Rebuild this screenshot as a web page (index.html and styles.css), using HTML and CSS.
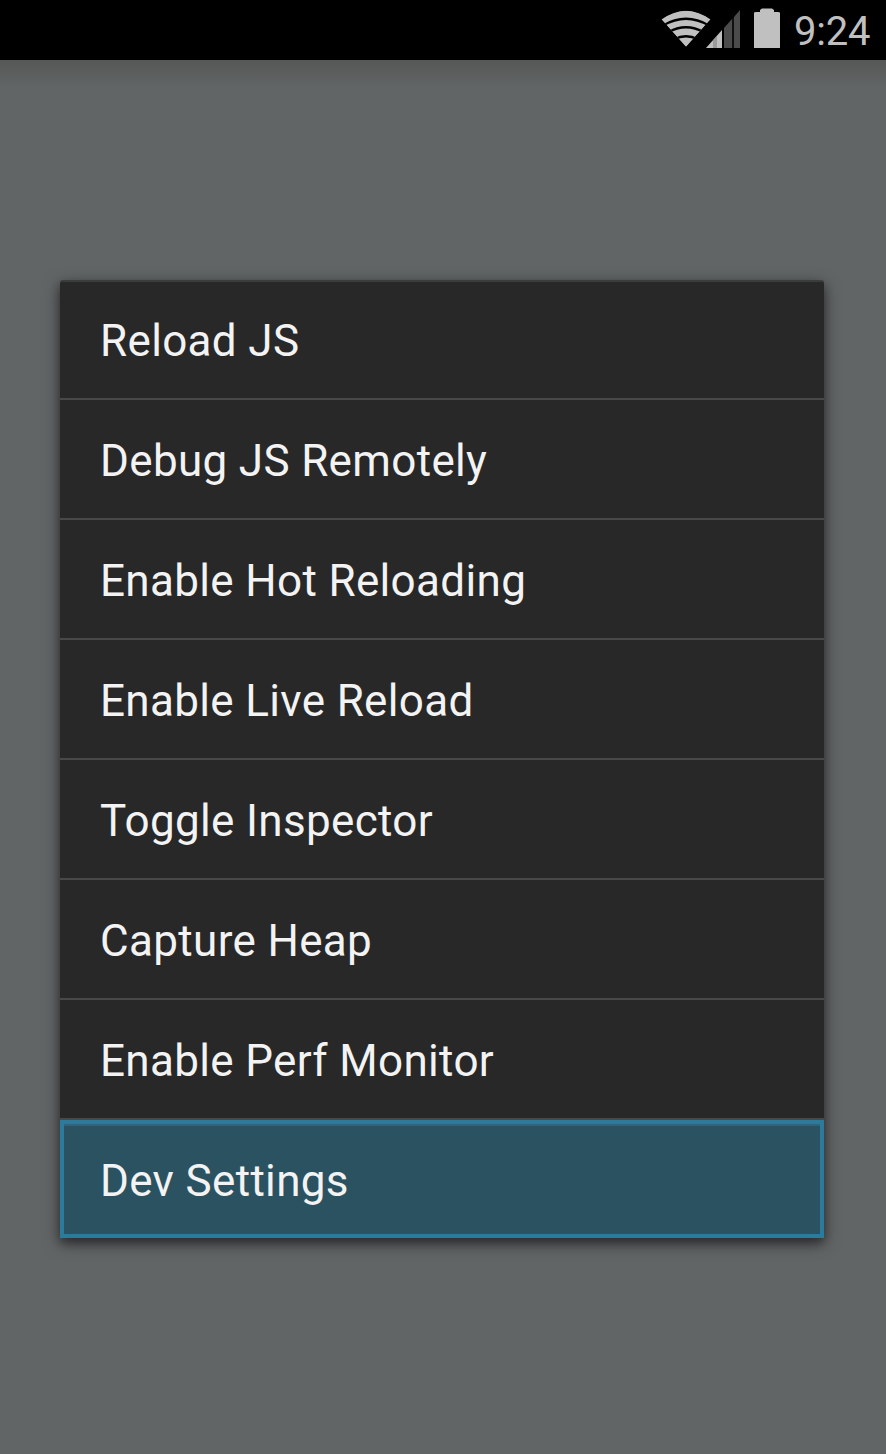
FILE: index.html
```html
<!DOCTYPE html>
<html lang="en">
<head>
<meta charset="utf-8">
<title>Developer menu</title>
<link rel="stylesheet" href="styles.css">
</head>
<body>
<header class="status-bar">
  <svg class="status-icons" width="130" height="60" viewBox="660 0 130 60" aria-hidden="true">
    <defs><clipPath id="fan"><path d="M661.500 19.500Q686 2 710.500 19.500L686 47Z"/></clipPath></defs>
    <g clip-path="url(#fan)">
      <path d="M661 19Q686 2 711 19L686 47Z" fill="#c0c0c0"/>
      <g fill="none" stroke="#000" stroke-width="2.300">
        <path d="M663 25.500Q686 12 709 25.500"/>
        <path d="M668 32.500Q686 22 704 32.500"/>
        <path d="M674 39.500Q686 33 698 39.500"/>
      </g>
    </g>
    <path d="M706 48L722 30V48Z" fill="#c0c0c0"/>
    <path d="M714 39V48M716 37V48" stroke="#777" stroke-width="1"/>
    <path d="M724 28L732 19V48H724ZM734 17L740 10V48H734Z" fill="#4b4b4b"/>
    <path d="M732 19L734 17V48H732Z" fill="#111"/>
    <path d="M754 48V13Q754 12 756 12H760V10L762 8.500H772L774 10V12H778Q780 12 780 13V48Z" fill="#c0c0c0"/>
  </svg>
  <time class="clock">9:24</time>
</header>
<main class="screen">
  <ul class="menu">
    <li class="item">Reload JS</li>
    <li class="item">Debug JS Remotely</li>
    <li class="item">Enable Hot Reloading</li>
    <li class="item">Enable Live Reload</li>
    <li class="item">Toggle Inspector</li>
    <li class="item">Capture Heap</li>
    <li class="item">Enable Perf Monitor</li>
    <li class="item selected">Dev Settings</li>
  </ul>
</main>
</body>
</html>
```
FILE: styles.css
```css
* { box-sizing: border-box; }
body {
  margin: 0;
  height: 1454px;
  display: flex;
  flex-direction: column;
  background: #626566;
  font-family: Roboto, sans-serif;
  overflow: hidden;
}
.status-bar {
  flex: none;
  height: 60px;
  padding-left: 660px;
  display: flex;
  background: #000;
}
.status-icons { flex: none; display: block; }
.clock {
  padding-left: 4px;
  line-height: 64px;
  font-size: 40px;
  letter-spacing: -.2px;
  color: #c0c0c0;
  white-space: nowrap;
}
.screen {
  flex: 1;
  padding: 220px 62px 0 60px;
  background: linear-gradient(#565757, #626566 28px);
}
.menu {
  list-style: none;
  margin: 0;
  padding: 0;
  height: 958px;
  border-top: 2px solid #3b3c3c;
  border-radius: 3px 3px 0 0;
  background: #282828;
  box-shadow: 0 5px 16px rgba(0, 0, 0, .5), 0 5px 8px rgba(0, 0, 0, .25);
}
.item {
  height: 120px;
  padding-left: 40px;
  border-bottom: 2px solid #494949;
  font-size: 44px;
  letter-spacing: .34px;
  line-height: 122px;
  color: #f3f3f3;
  white-space: nowrap;
}
.item:first-child { height: 118px; line-height: 119px; }
.item.selected {
  height: 118px;
  padding-left: 36px;
  border: 4px solid #2d7b9a;
  background: #2b5260;
  box-shadow: inset 0 2px #2d6679;
  line-height: 114px;
}
```
